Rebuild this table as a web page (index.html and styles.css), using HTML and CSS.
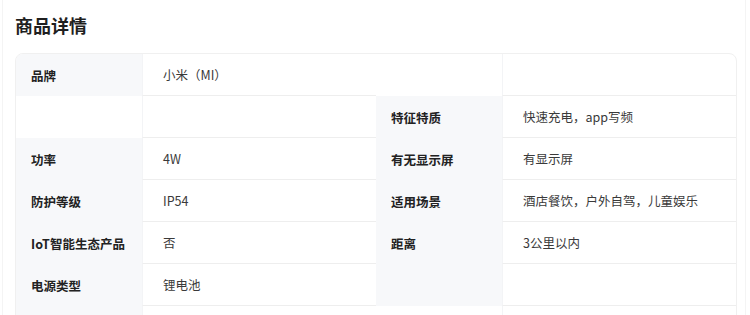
FILE: index.html
```html
<!DOCTYPE html>
<html lang="zh-CN">
<head>
<meta charset="utf-8">
<title>商品详情</title>
<link rel="stylesheet" href="styles.css">
</head>
<body>
<div class="page">
  <h2 class="title">商品详情</h2>
  <div class="card">
    <div class="col">
      <div class="row"><div class="label">品牌</div><div class="value">小米（MI）</div></div>
      <div class="row"><div class="label blank"></div><div class="value"></div></div>
      <div class="row"><div class="label">功率</div><div class="value">4W</div></div>
      <div class="row"><div class="label">防护等级</div><div class="value">IP54</div></div>
      <div class="row"><div class="label">IoT智能生态产品</div><div class="value">否</div></div>
      <div class="row"><div class="label">电源类型</div><div class="value">锂电池</div></div>
      <div class="row"><div class="label"></div><div class="value"></div></div>
    </div>
    <div class="col">
      <div class="row"><div class="label blank"></div><div class="value"></div></div>
      <div class="row"><div class="label">特征特质</div><div class="value">快速充电，app写频</div></div>
      <div class="row"><div class="label">有无显示屏</div><div class="value">有显示屏</div></div>
      <div class="row"><div class="label">适用场景</div><div class="value">酒店餐饮，户外自驾，儿童娱乐</div></div>
      <div class="row"><div class="label">距离</div><div class="value">3公里以内</div></div>
      <div class="row"><div class="label"></div><div class="value"></div></div>
      <div class="row"><div class="label blank"></div><div class="value none"></div></div>
    </div>
  </div>
</div>
</body>
</html>
```
FILE: styles.css
```css
html, body {
  margin: 0;
  padding: 0;
  background: #ffffff;
  font-family: "Noto Sans CJK SC", "Noto Sans", sans-serif;
  overflow: hidden;
}
.page {
  margin: 0 4px 0 2px;
  border-left: 1px solid #f4f4f4;
  border-right: 1px solid #f4f4f4;
  padding: 13px 0 0 12px;
  height: 320px;
  box-sizing: border-box;
}
.title {
  margin: 0;
  font-size: 18px;
  line-height: 24px;
  font-weight: 700;
  color: #1f1f1f;
}
.card {
  margin-top: 16px;
  width: 722px;
  box-sizing: border-box;
  border: 1px solid #f0f0f0;
  border-radius: 8px;
  overflow: hidden;
  display: grid;
  grid-template-columns: 1fr 1fr;
}
.row {
  display: grid;
  grid-template-columns: 126px 1fr;
  height: 42px;
}
.label {
  background: #f7f8fa;
  padding-left: 15px;
  display: flex;
  align-items: center;
  font-size: 12.5px;
  font-weight: 700;
  color: #222;
}
.label.blank {
  background: #ffffff;
}
.value {
  border-left: 1px solid #f3f4f6;
  border-bottom: 1px solid #eeeeee;
  padding-left: 20px;
  display: flex;
  align-items: center;
  font-size: 12.5px;
  color: #3a3a3a;
}
.value.none {
  border-bottom: none;
}
```
